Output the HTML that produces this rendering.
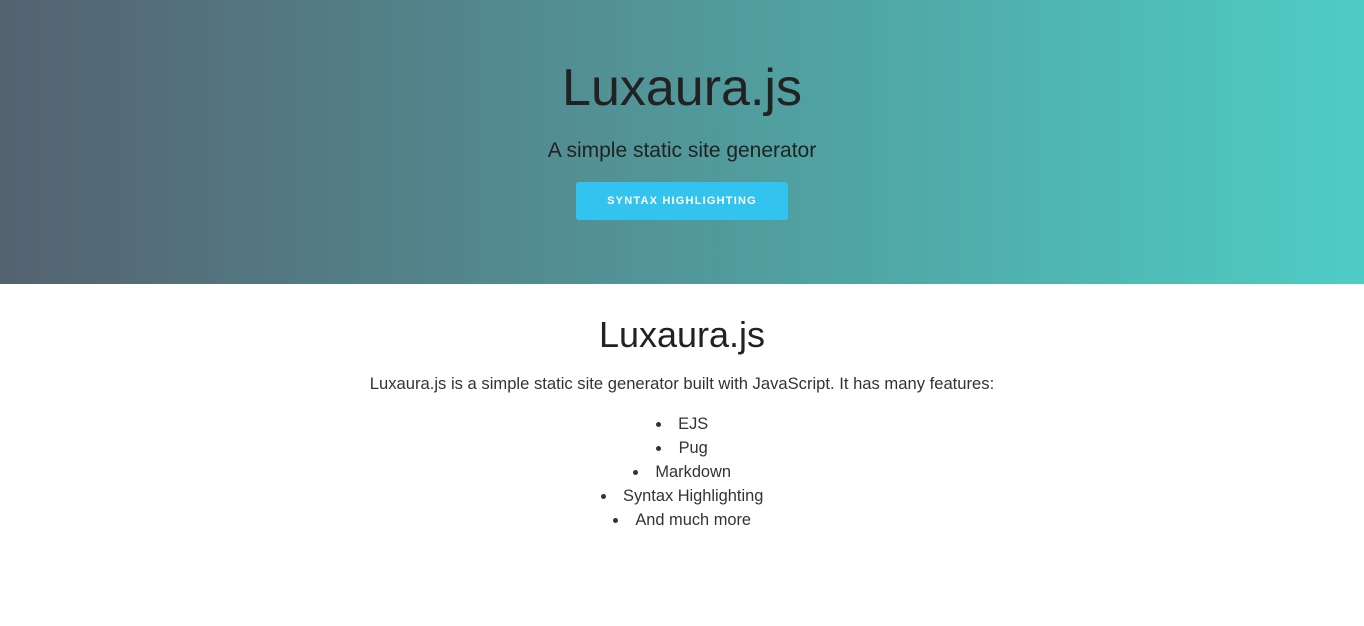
<!DOCTYPE html>
<html><head><style>
body{margin:0;font-family:"Liberation Sans",sans-serif;color:#222;background:#fff;}
.hero{height:284px;background:linear-gradient(to right,#556270,#4ECDC4);text-align:center;overflow:hidden;}
.hero h1{margin:0;padding-top:56px;font-weight:normal;font-size:52px;line-height:64px;color:#222;}
.hero p{margin:19px 0 0;font-size:21px;line-height:24px;color:#222;}
.btn{display:inline-block;margin-top:19px;width:212px;height:38px;line-height:38px;background:#32c3ef;border-radius:3px;color:#fff;font-size:11px;font-weight:bold;letter-spacing:1.2px;}
h2{font-weight:normal;font-size:36px;line-height:44px;margin:0;}
.c{position:absolute;left:0;right:0;text-align:center;}
ul{list-style:disc inside;padding:0;margin:0;}
li{font-size:16.4px;line-height:24px;color:#333;}
</style></head><body>
<div class="hero">
<h1>Luxaura.js</h1>
<p>A simple static site generator</p>
<div class="btn">SYNTAX HIGHLIGHTING</div>
</div>
<div class="c" style="top:313px"><h2>Luxaura.js</h2></div>
<div class="c" style="top:373px;font-size:16.6px;line-height:22px;color:#333">Luxaura.js is a simple static site generator built with JavaScript. It has many features:</div>
<div class="c" style="top:412px"><ul><li>EJS</li><li>Pug</li><li>Markdown</li><li>Syntax Highlighting</li><li>And much more</li></ul></div>
</body></html>
